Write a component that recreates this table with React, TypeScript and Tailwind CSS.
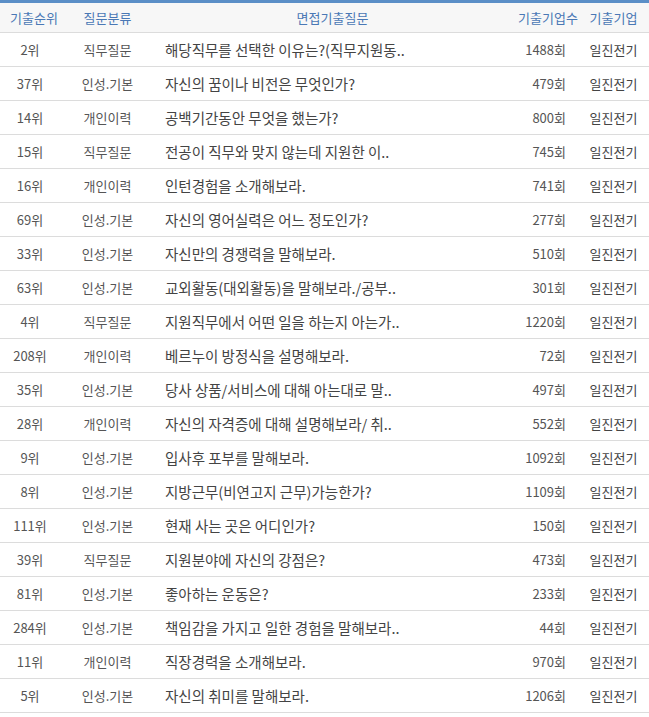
import React from 'react';

type Row = { rank: string; cat: string; q: string; cnt: string; co: string };

const rows: Row[] = [
  { rank: '2위', cat: '직무질문', q: '해당직무를 선택한 이유는?(직무지원동..', cnt: '1488회', co: '일진전기' },
  { rank: '37위', cat: '인성.기본', q: '자신의 꿈이나 비전은 무엇인가?', cnt: '479회', co: '일진전기' },
  { rank: '14위', cat: '개인이력', q: '공백기간동안 무엇을 했는가?', cnt: '800회', co: '일진전기' },
  { rank: '15위', cat: '직무질문', q: '전공이 직무와 맞지 않는데 지원한 이..', cnt: '745회', co: '일진전기' },
  { rank: '16위', cat: '개인이력', q: '인턴경험을 소개해보라.', cnt: '741회', co: '일진전기' },
  { rank: '69위', cat: '인성.기본', q: '자신의 영어실력은 어느 정도인가?', cnt: '277회', co: '일진전기' },
  { rank: '33위', cat: '인성.기본', q: '자신만의 경쟁력을 말해보라.', cnt: '510회', co: '일진전기' },
  { rank: '63위', cat: '인성.기본', q: '교외활동(대외활동)을 말해보라./공부..', cnt: '301회', co: '일진전기' },
  { rank: '4위', cat: '직무질문', q: '지원직무에서 어떤 일을 하는지 아는가..', cnt: '1220회', co: '일진전기' },
  { rank: '208위', cat: '개인이력', q: '베르누이 방정식을 설명해보라.', cnt: '72회', co: '일진전기' },
  { rank: '35위', cat: '인성.기본', q: '당사 상품/서비스에 대해 아는대로 말..', cnt: '497회', co: '일진전기' },
  { rank: '28위', cat: '개인이력', q: '자신의 자격증에 대해 설명해보라/ 취..', cnt: '552회', co: '일진전기' },
  { rank: '9위', cat: '인성.기본', q: '입사후 포부를 말해보라.', cnt: '1092회', co: '일진전기' },
  { rank: '8위', cat: '인성.기본', q: '지방근무(비연고지 근무)가능한가?', cnt: '1109회', co: '일진전기' },
  { rank: '111위', cat: '인성.기본', q: '현재 사는 곳은 어디인가?', cnt: '150회', co: '일진전기' },
  { rank: '39위', cat: '직무질문', q: '지원분야에 자신의 강점은?', cnt: '473회', co: '일진전기' },
  { rank: '81위', cat: '인성.기본', q: '좋아하는 운동은?', cnt: '233회', co: '일진전기' },
  { rank: '284위', cat: '인성.기본', q: '책임감을 가지고 일한 경험을 말해보라..', cnt: '44회', co: '일진전기' },
  { rank: '11위', cat: '개인이력', q: '직장경력을 소개해보라.', cnt: '970회', co: '일진전기' },
  { rank: '5위', cat: '인성.기본', q: '자신의 취미를 말해보라.', cnt: '1206회', co: '일진전기' },
];

const grid = 'grid grid-cols-[60px_95px_355px_68px_71px] items-center';

export default function App() {
  return (
    <div
      className="w-[649px] bg-white text-[13px] text-[#555]"
      style={{ fontFamily: '"Noto Sans CJK KR", "Noto Sans", sans-serif' }}
    >
      <div className={`${grid} h-[33px] border-t-[3px] border-t-[#5b8fc7] border-b border-b-[#dcdcdc] bg-[#f7f7f7] text-[13px] text-[#4a78b5]`}>
        <div className="pl-[8px] text-center">기출순위</div>
        <div className="text-center">질문분류</div>
        <div className="text-center">면접기출질문</div>
        <div className="pl-[8px] text-center">기출기업수</div>
        <div className="text-center">기출기업</div>
      </div>
      {rows.map((r, i) => (
        <div key={i} className={`${grid} h-[34px] border-b border-[#dcdcdc]`}>
          <div className="text-center">{r.rank}</div>
          <div className="text-center">{r.cat}</div>
          <div className="pl-[10px] text-[14.5px] text-[#444] whitespace-nowrap">{r.q}</div>
          <div className="pr-[12px] text-right">{r.cnt}</div>
          <div className="text-center text-[#444]">{r.co}</div>
        </div>
      ))}
    </div>
  );
}
